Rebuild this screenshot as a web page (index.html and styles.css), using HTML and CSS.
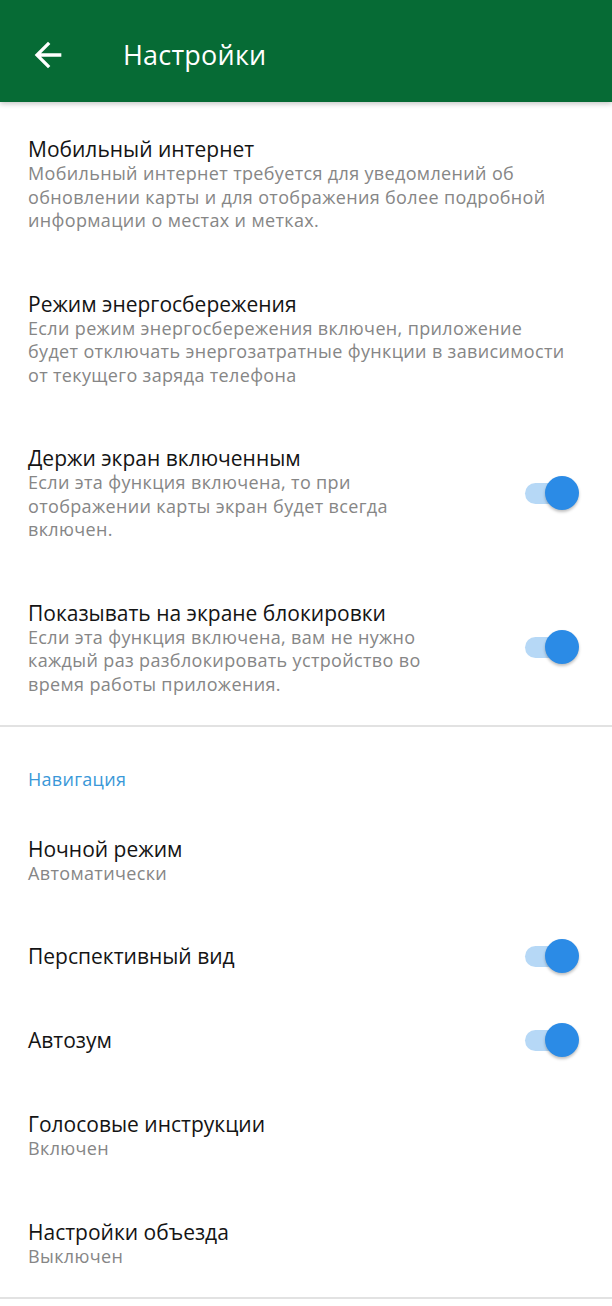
FILE: index.html
```html
<!DOCTYPE html>
<html lang="ru">
<head>
<meta charset="utf-8">
<link rel="stylesheet" href="styles.css">
</head>
<body>
<header class="appbar">
  <svg class="back" viewBox="0 0 24 24" width="40" height="40"><path d="M20 11H7.830l5.590-5.590L12 4l-8 8 8 8 1.410-1.410L7.830 13H20v-2z" fill="#fff"/></svg>
  <h1 class="appbar-title">Настройки</h1>
</header>
<main class="list">
  <div class="item">
    <div class="text">
      <div class="title">Мобильный интернет</div>
      <div class="sub">Мобильный интернет требуется для уведомлений об<br>обновлении карты и для отображения более подробной<br>информации о местах и метках.</div>
    </div>
  </div>
  <div class="item">
    <div class="text">
      <div class="title">Режим энергосбережения</div>
      <div class="sub">Если режим энергосбережения включен, приложение<br>будет отключать энергозатратные функции в зависимости<br>от текущего заряда телефона</div>
    </div>
  </div>
  <div class="item">
    <div class="text">
      <div class="title">Держи экран включенным</div>
      <div class="sub">Если эта функция включена, то при<br>отображении карты экран будет всегда<br>включен.</div>
    </div>
    <span class="switch"><span class="thumb"></span></span>
  </div>
  <div class="item">
    <div class="text">
      <div class="title">Показывать на экране блокировки</div>
      <div class="sub">Если эта функция включена, вам не нужно<br>каждый раз разблокировать устройство во<br>время работы приложения.</div>
    </div>
    <span class="switch"><span class="thumb"></span></span>
  </div>
  <div class="divider"></div>
  <div class="category">Навигация</div>
  <div class="item">
    <div class="text">
      <div class="title">Ночной режим</div>
      <div class="sub">Автоматически</div>
    </div>
  </div>
  <div class="item">
    <div class="text">
      <div class="title">Перспективный вид</div>
    </div>
    <span class="switch"><span class="thumb"></span></span>
  </div>
  <div class="item">
    <div class="text">
      <div class="title">Автозум</div>
    </div>
    <span class="switch"><span class="thumb"></span></span>
  </div>
  <div class="item">
    <div class="text">
      <div class="title">Голосовые инструкции</div>
      <div class="sub">Включен</div>
    </div>
  </div>
  <div class="item">
    <div class="text">
      <div class="title">Настройки объезда</div>
      <div class="sub">Выключен</div>
    </div>
  </div>
  <div class="divider"></div>
</main>
</body>
</html>
```
FILE: styles.css
```css
* { box-sizing: border-box; }
html, body { margin: 0; padding: 0; background: #fff; }
body {
  font-family: "Open Sans", "Noto Sans", sans-serif;
  width: 612px;
  height: 1306px;
  overflow: hidden;
}
.appbar {
  height: 102px;
  background: #066b35;
  display: flex;
  align-items: center;
  padding: 6px 0 0 28px;
  box-shadow: 0 2px 5px rgba(0,0,0,0.22);
  position: relative;
  z-index: 1;
}
.back { display: block; margin-top: 2px; }
.appbar-title {
  margin: 0 0 0 55px;
  color: #fff;
  font-weight: 400;
  font-size: 27px;
  letter-spacing: 0.2px;
}
.list { padding-top: 5px; }
.item {
  display: flex;
  align-items: center;
  padding: 29px 39px 29px 28px;
}
.text { flex: 1; }
.title {
  font-size: 21px;
  line-height: 26px;
  color: #141414;
}
.sub {
  font-size: 18px;
  letter-spacing: 0.35px;
  line-height: 23.5px;
  color: #868686;
  white-space: nowrap;
}
.switch {
  position: relative;
  width: 48px;
  height: 21px;
  border-radius: 11px;
  background: #b6d8f6;
  flex: none;
}
.thumb {
  position: absolute;
  right: -6px;
  top: -7px;
  width: 34px;
  height: 34px;
  border-radius: 50%;
  background: #2b8be6;
  box-shadow: 0 2px 3px rgba(0,0,0,0.25);
}
.divider { height: 2px; background: #e2e2e2; }
.category {
  padding: 41px 28px 15px;
  font-size: 18px;
  letter-spacing: 0.3px;
  line-height: 23.5px;
  color: #3a98d8;
}
```
